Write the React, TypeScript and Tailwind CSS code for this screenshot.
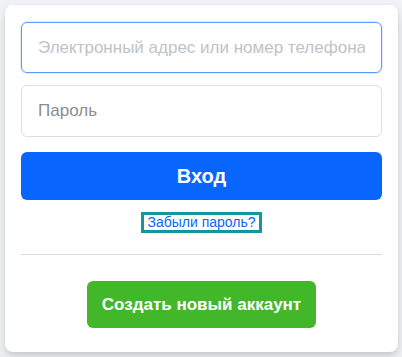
export default function App() {
  return (
    <div className="min-h-screen bg-[#f0f2f5] p-[5px] pb-0 font-['Liberation_Sans',Arial,sans-serif]">
      <div className="flex h-[347px] w-[393px] flex-col rounded-lg bg-white px-4 pt-[17px] shadow-[0_2px_4px_rgba(0,0,0,0.1),0_8px_16px_rgba(0,0,0,0.1)]">
        <input
          type="text"
          placeholder="Электронный адрес или номер телефона"
          className="h-[51px] w-full rounded-md border border-[#5b9bff] px-4 text-[17px] text-[#1c1e21] outline-none placeholder:text-[#bec3c9] shadow-[0_0_0_1px_rgba(8,102,255,0.12)]"
        />
        <input
          type="password"
          placeholder="Пароль"
          className="mt-[12px] h-[52px] w-full rounded-md border border-[#dddfe2] px-4 text-[17px] text-[#1c1e21] outline-none placeholder:text-[#8a8d91]"
        />
        <button
          type="button"
          className="mt-[15px] h-[48px] w-full rounded-md bg-[#0866ff] text-[20px] font-bold text-white"
        >
          Вход
        </button>
        <div className="mt-[12px] flex justify-center">
          <a
            href="#"
            className="border-[3px] border-[#13969c] px-[3px] text-[14px] leading-[15px] text-[#0866ff] no-underline"
          >
            Забыли пароль?
          </a>
        </div>
        <div className="mt-[21px] h-px w-full bg-[#dadde1]" />
        <div className="mt-[26px] flex justify-center">
          <button
            type="button"
            className="h-[47px] w-[229px] rounded-md bg-[#42b72a] text-[17px] font-bold text-white"
          >
            Создать новый аккаунт
          </button>
        </div>
      </div>
    </div>
  );
}
